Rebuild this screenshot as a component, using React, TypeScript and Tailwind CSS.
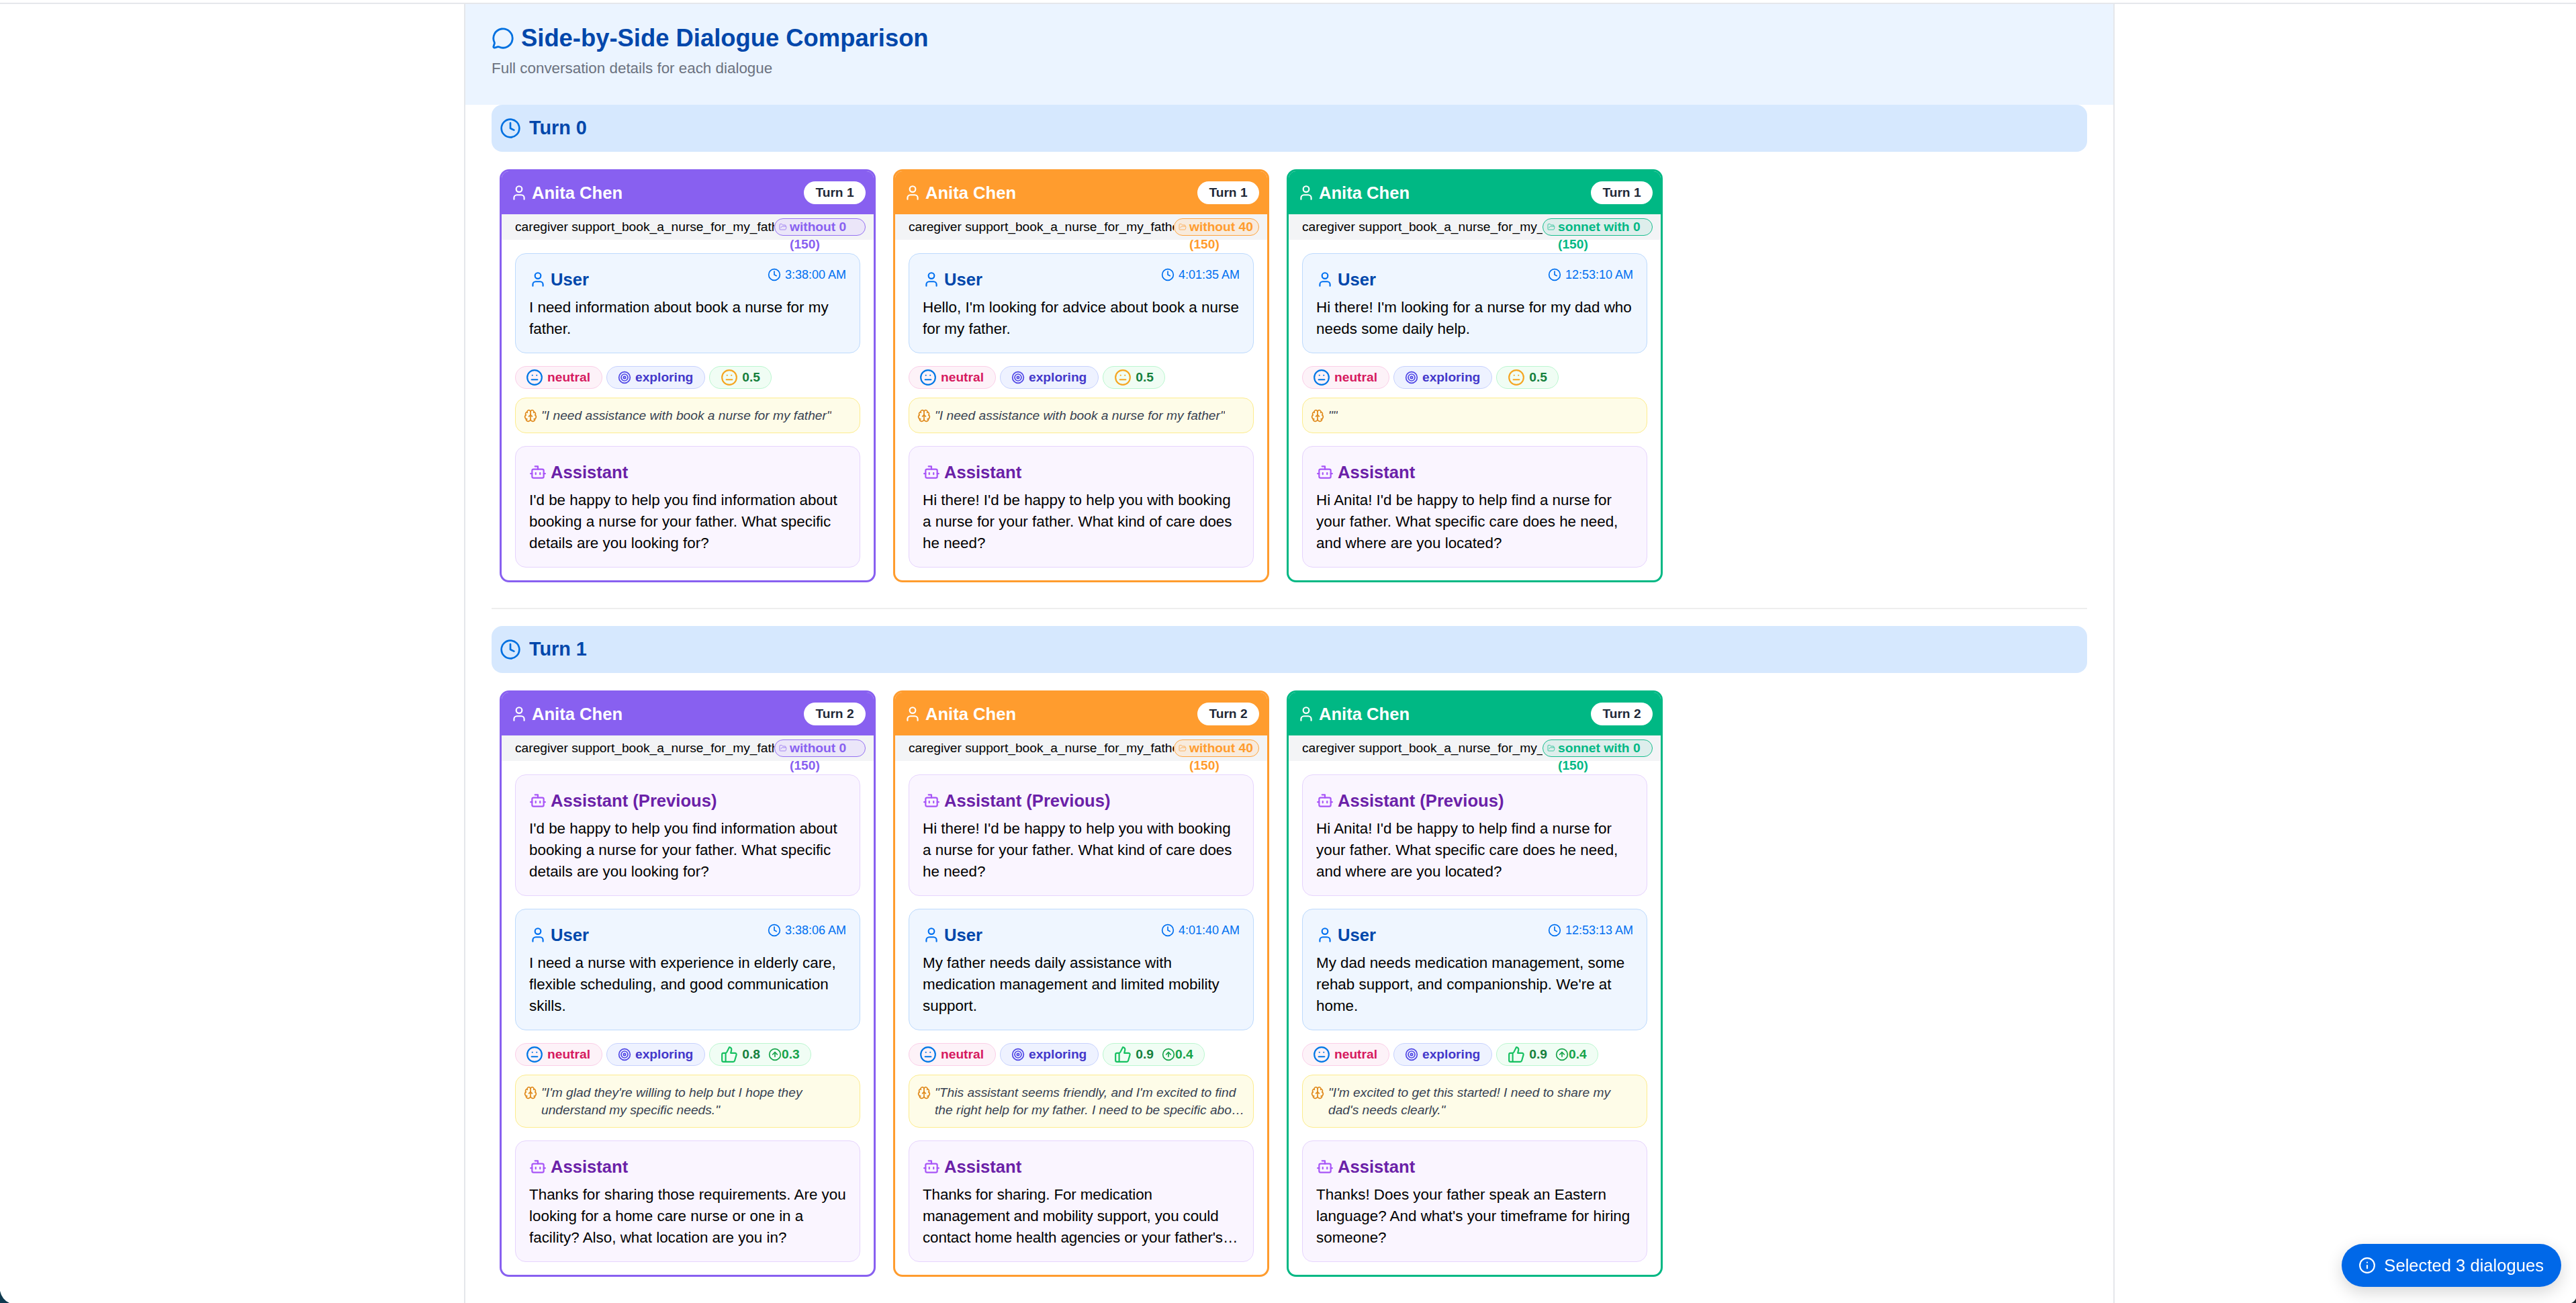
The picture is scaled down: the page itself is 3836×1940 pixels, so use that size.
import React from "react";
import { Bot, Brain, CircleArrowUp, Clock, FolderOpen, Info, Meh, MessageCircle, Target, ThumbsUp, User } from "lucide-react";

type Theme = {
  border: string;
  head: string;
  chip: string;
};

const purple: Theme = {
  border: "border-[#8860f0]",
  head: "bg-[#8860f0]",
  chip: "w-[136px] border-[#9572f2] bg-[#ebe6f9] text-[#8860f0]",
};
const orange: Theme = {
  border: "border-[#ff9c2e]",
  head: "bg-[#ff9c2e]",
  chip: "w-[127px] border-[#ffa540] bg-[#f8ebdd] text-[#ff9c2e]",
};
const green: Theme = {
  border: "border-[#00b884]",
  head: "bg-[#00b884]",
  chip: "w-[164px] border-[#18be8e] bg-[#deeeec] text-[#00b884]",
};

type CardData = {
  theme: Theme;
  turn: string;
  topic: string;
  model: string;
  prev?: string;
  user: string;
  time: string;
  sentiment: string;
  delta?: string;
  quote: string;
  reply: string;
  tight?: boolean;
};

const topic = "caregiver support_book_a_nurse_for_my_father";

const turn0: CardData[] = [
  {
    theme: purple,
    turn: "Turn 1",
    topic,
    model: "without 0",
    user: "I need information about book a nurse for my father.",
    time: "3:38:00 AM",
    sentiment: "0.5",
    quote: "\"I need assistance with book a nurse for my father\"",
    reply: "I'd be happy to help you find information about booking a nurse for your father. What specific details are you looking for?",
  },
  {
    theme: orange,
    turn: "Turn 1",
    topic,
    model: "without 40",
    user: "Hello, I'm looking for advice about book a nurse for my father.",
    time: "4:01:35 AM",
    sentiment: "0.5",
    quote: "\"I need assistance with book a nurse for my father\"",
    reply: "Hi there! I'd be happy to help you with booking a nurse for your father. What kind of care does he need?",
  },
  {
    theme: green,
    turn: "Turn 1",
    topic,
    model: "sonnet with 0",
    user: "Hi there! I'm looking for a nurse for my dad who needs some daily help.",
    time: "12:53:10 AM",
    sentiment: "0.5",
    quote: "\"\"",
    reply: "Hi Anita! I'd be happy to help find a nurse for your father. What specific care does he need, and where are you located?",
  },
];

const turn1: CardData[] = [
  {
    theme: purple,
    turn: "Turn 2",
    topic,
    model: "without 0",
    prev: turn0[0].reply,
    user: "I need a nurse with experience in elderly care, flexible scheduling, and good communication skills.",
    time: "3:38:06 AM",
    sentiment: "0.8",
    delta: "0.3",
    quote: "\"I'm glad they're willing to help but I hope they understand my specific needs.\"",
    reply: "Thanks for sharing those requirements. Are you looking for a home care nurse or one in a facility? Also, what location are you in?",
  },
  {
    theme: orange,
    turn: "Turn 2",
    topic,
    model: "without 40",
    prev: turn0[1].reply,
    user: "My father needs daily assistance with medication management and limited mobility support.",
    time: "4:01:40 AM",
    sentiment: "0.9",
    delta: "0.4",
    quote: "\"This assistant seems friendly, and I'm excited to find the right help for my father. I need to be specific about what he needs.\"",
    reply: "Thanks for sharing. For medication management and mobility support, you could contact home health agencies or your father's…",
    tight: true,
  },
  {
    theme: green,
    turn: "Turn 2",
    topic,
    model: "sonnet with 0",
    prev: turn0[2].reply,
    user: "My dad needs medication management, some rehab support, and companionship. We're at home.",
    time: "12:53:13 AM",
    sentiment: "0.9",
    delta: "0.4",
    quote: "\"I'm excited to get this started! I need to share my dad's needs clearly.\"",
    reply: "Thanks! Does your father speak an Eastern language? And what's your timeframe for hiring someone?",
  },
];

const AssistantBox = ({ label, text, tight }: { label: string; text: string; tight?: boolean }) => (
  <div className="rounded-2xl border border-[#e6d4fd] bg-[#faf5ff] px-5 pt-5 pb-[19px]">
    <div className="mb-2 flex h-9 items-center gap-[6px] text-[25.6px] font-bold text-[#6b21a8]">
      <Bot size={26} className="text-[#a855f7]" />
      {label}
    </div>
    <p className={`line-clamp-3 text-[22.4px] leading-8 text-black ${tight ? "tracking-[-0.12px]" : ""}`}>{text}</p>
  </div>
);

const Card = ({ d }: { d: CardData }) => (
  <div className={`w-[560px] overflow-hidden rounded-[14px] border-[3px] bg-white ${d.theme.border}`}>
    <div className={`flex h-[64px] items-center justify-between pl-[13px] pr-3 ${d.theme.head}`}>
      <div className="flex items-center gap-[6px] text-[25.6px] font-bold text-white">
        <User size={26} />
        Anita Chen
      </div>
      <span className="flex h-[34px] w-[92px] items-center justify-center rounded-full bg-white text-[19.2px] font-bold text-[#1f2937]">{d.turn}</span>
    </div>
    <div className="flex h-[38px] items-center justify-between bg-[#f3f4f6] pl-5 pr-3">
      <span className="min-w-0 flex-1 overflow-hidden text-[19.2px] whitespace-nowrap text-black">{d.topic}</span>
      <span className={`relative flex h-[26px] shrink-0 items-center gap-1 rounded-full border pl-[6px] text-[19.2px] leading-[26px] font-bold ${d.theme.chip}`}>
        <FolderOpen size={12} className="shrink-0 opacity-70" />
        <span>{d.model}</span>
        <span className="absolute top-[25px] left-[22px]">(150)</span>
      </span>
    </div>
    <div className="flex flex-col px-5 pt-5 pb-[19px]">
      {d.prev && (
        <div className="mb-[19px]">
          <AssistantBox label="Assistant (Previous)" text={d.prev} />
        </div>
      )}
      <div className="rounded-2xl border border-[#bddafd] bg-[#eff6ff] px-5 pt-5 pb-[19px]">
        <div className="mb-2 flex h-9 items-start justify-between">
          <div className="flex h-9 items-center gap-[6px] text-[25.6px] font-bold text-[#0047ab]">
            <User size={26} className="text-[#0070f0]" />
            User
          </div>
          <div className="flex items-center gap-[6px] text-[18px] leading-[22px] text-[#0070f0]">
            <Clock size={20} />
            {d.time}
          </div>
        </div>
        <p className="text-[22.4px] leading-8 text-black">{d.user}</p>
      </div>
      <div className="mt-[19px] flex gap-[6px]">
        <span className="flex h-[34px] items-center gap-[6px] rounded-full border border-[#fbcfe8] bg-[#fdf2f8] pr-[17px] pl-[15px] text-[19.2px] font-bold text-[#d6195f]">
          <Meh size={26} className="text-[#0077e6]" />
          neutral
        </span>
        <span className="flex h-[34px] items-center gap-[6px] rounded-full border border-[#c7d2fe] bg-[#eef2ff] pr-[17px] pl-[16px] text-[19.2px] font-bold text-[#4338ca]">
          <Target size={20} className="text-[#4f46e5]" />
          exploring
        </span>
        <span className="flex h-[34px] items-center rounded-full border border-[#bbf7d0] bg-[#f0fdf4] pr-[16px] pl-[16px] text-[19.2px] font-bold text-[#15803d]">
          {d.delta ? <ThumbsUp size={26} className="text-[#16c060]" /> : <Meh size={26} className="text-[#f5a623]" />}
          <span className="ml-[6px]">{d.sentiment}</span>
          {d.delta && (
            <span className="ml-[12px] flex items-center text-[#16a34a]">
              <CircleArrowUp size={20} />
              {d.delta}
            </span>
          )}
        </span>
      </div>
      <div className="mt-[13px] flex gap-[6px] rounded-2xl border border-[#fdec8e] bg-[#fefce8] px-[12px] py-[12.5px]">
        <Brain size={20} className="mt-[3px] shrink-0 text-[#e08a1e]" />
        <p className="line-clamp-2 text-[19.2px] leading-[26px] text-[#374151] italic">{d.quote}</p>
      </div>
      <div className="mt-[19px]">
        <AssistantBox label="Assistant" text={d.reply} tight={d.tight} />
      </div>
    </div>
  </div>
);

const TurnSection = ({ title, cards }: { title: string; cards: CardData[] }) => (
  <section>
    <div className="flex h-[70px] items-center gap-3 rounded-2xl bg-[#d6e8fe] pl-3 text-[28.8px] font-bold text-[#0047ab]">
      <Clock size={32} className="text-[#0070e0]" />
      {title}
    </div>
    <div className="mt-[26px] flex gap-[26px] pl-3">
      {cards.map((d) => (
        <Card key={d.time} d={d} />
      ))}
    </div>
  </section>
);

// rounded corners of the captured window
const WindowCorners = () => (
  <>
    <svg className="absolute bottom-0 left-0" width="14" height="18" viewBox="0 0 14 18">
      <path d="M0 0 Q3 13 14 18 H0 Z" fill="#0f3a4f" />
    </svg>
    <svg className="absolute right-0 bottom-0" width="7" height="7" viewBox="0 0 7 7">
      <path d="M7 0 Q5 5 0 7 H7 Z" fill="#1f2a30" />
    </svg>
  </>
);

export default function App() {
  return (
    <div className="relative h-[1940px] overflow-hidden bg-white font-['Liberation_Sans',Arial,sans-serif]">
      <div className="mt-1 h-[2px] bg-[#e5e7eb]" />
      <div className="ml-[691px] min-h-[1934px] w-[2458px] border-x-2 border-[#e5e7eb] bg-white">
        <header className="h-[150px] bg-[#ebf4ff] pt-[30px] pl-[39px]">
          <div className="flex h-[42px] items-center gap-[10px] text-[36.4px] font-bold text-[#0047ab]">
            <MessageCircle size={34} className="text-[#0070e0]" />
            Side-by-Side Dialogue Comparison
          </div>
          <p className="mt-[10px] text-[22.4px] leading-[28px] text-[#6b7280]">Full conversation details for each dialogue</p>
        </header>
        <div className="px-[39px]">
          <TurnSection title="Turn 0" cards={turn0} />
          <hr className="mt-[38px] mb-[25px] border-t-2 border-[#eeeeee]" />
          <TurnSection title="Turn 1" cards={turn1} />
        </div>
      </div>
      <button className="fixed right-[22px] bottom-[24px] flex h-[64px] items-center gap-[12px] rounded-full bg-[#0068e8] pr-[26px] pl-[25px] text-[25.6px] text-white shadow-[0_8px_24px_rgba(0,0,0,0.16)]">
        <Info size={26} />
        Selected 3 dialogues
      </button>
      <WindowCorners />
    </div>
  );
}
